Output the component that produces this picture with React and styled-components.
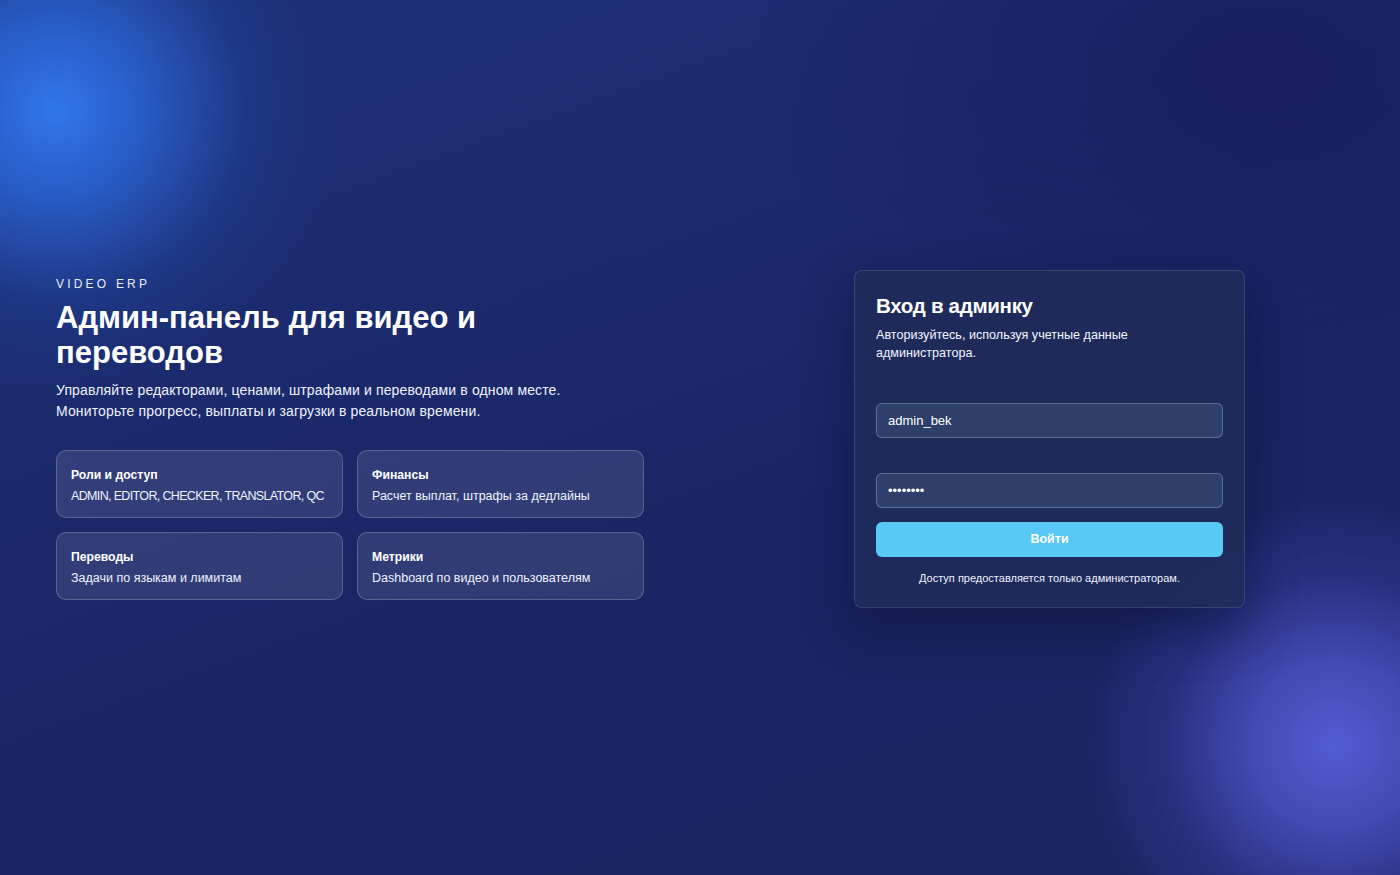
import React from "react";
import styled, { createGlobalStyle } from "styled-components";

const Global = createGlobalStyle`
  * { box-sizing: border-box; }
  html, body { margin: 0; padding: 0; }
  body {
    font-family: "Liberation Sans", Arial, sans-serif;
    color: #fff;
    background: #1b2766;
  }
`;

const Page = styled.div`
  position: relative;
  width: 100%;
  min-height: 100vh;
  height: 875px;
  overflow: hidden;
  display: flex;
  align-items: center;
  justify-content: space-between;
  padding: 2px 155px 0 56px;
  background:
    radial-gradient(circle at 55px 110px, rgba(48, 118, 236, 1) 0px, rgba(44, 106, 222, 0.75) 90px, rgba(36, 80, 180, 0.3) 190px, rgba(30, 60, 150, 0) 280px),
    radial-gradient(circle at 1335px 745px, rgba(82, 92, 210, 1) 0px, rgba(76, 86, 200, 0.8) 80px, rgba(60, 70, 180, 0.35) 170px, rgba(50, 60, 160, 0) 250px),
    linear-gradient(160deg, #1c2f75 0%, #1b2a6c 35%, #1a2464 60%, #1b2560 100%);
`;

const TopTint = styled.div`
  position: absolute;
  inset: 0;
  pointer-events: none;
  background: radial-gradient(ellipse at 1250px 60px, rgba(24, 22, 88, 0.55) 0px, rgba(24, 22, 88, 0) 500px);
`;

const Intro = styled.section`
  position: relative;
  width: 588px;
  display: flex;
  flex-direction: column;
`;

const Eyebrow = styled.div`
  font-size: 12px;
  letter-spacing: 3.2px;
  line-height: 14px;
  color: #e6ecff;
  margin-bottom: 9px;
`;

const Title = styled.h1`
  margin: 0;
  font-size: 31px;
  line-height: 35px;
  font-weight: 700;
  width: 480px;
`;

const Lead = styled.p`
  margin: 10px 0 0;
  font-size: 14px;
  letter-spacing: 0.13px;
  line-height: 21px;
  color: #eef2ff;
`;

const Features = styled.div`
  display: grid;
  grid-template-columns: 1fr 1fr;
  gap: 14px;
  margin-top: 28px;
`;

const Feature = styled.div`
  height: 68px;
  padding: 16px 14px 0;
  border-radius: 10px;
  background: rgba(255, 255, 255, 0.1);
  border: 1px solid rgba(255, 255, 255, 0.2);
  display: flex;
  flex-direction: column;
  gap: 5px;
`;

const FeatureTitle = styled.div`
  font-size: 12.2px;
  font-weight: 700;
  line-height: 16px;
`;

const FeatureText = styled.div`
  font-size: 12.5px;
  line-height: 16px;
  white-space: nowrap;
  letter-spacing: ${(p) => (p.$tight ? "-0.65px" : "0")};
  color: #f0f3ff;
`;

const Card = styled.form`
  position: relative;
  width: 391px;
  padding: 22px 21px 22px;
  border-radius: 8px;
  background: rgba(32, 44, 88, 0.85);
  border: 1px solid rgba(255, 255, 255, 0.12);
  box-shadow: 0 20px 50px rgba(8, 12, 40, 0.45);
  display: flex;
  flex-direction: column;
`;

const CardTitle = styled.h2`
  margin: 0;
  font-size: 20.5px;
  line-height: 26px;
  font-weight: 700;
  letter-spacing: -0.3px;
`;

const CardText = styled.p`
  margin: 7px 0 0;
  font-size: 12.6px;
  line-height: 18px;
  width: 280px;
  color: #f2f5ff;
`;

const Input = styled.input`
  display: block;
  width: 100%;
  height: 35px;
  margin-top: ${(p) => p.$mt}px;
  padding: 0 11px;
  border-radius: 6px;
  border: 1px solid rgba(148, 170, 210, 0.45);
  background: #2d3f6a;
  color: #fff;
  font-family: "Liberation Sans", Arial, sans-serif;
  font-size: 13px;
  outline: none;
`;

const Button = styled.button`
  height: 35px;
  margin-top: 14px;
  border: none;
  border-radius: 6px;
  background: #58c8f4;
  color: #fff;
  font-family: "Liberation Sans", Arial, sans-serif;
  font-size: 12.5px;
  font-weight: 700;
  cursor: pointer;
`;

const Note = styled.p`
  margin: 15px 0 0;
  font-size: 11px;
  line-height: 13px;
  text-align: center;
  color: #eef2ff;
`;

const features = [
  ["Роли и доступ", "ADMIN, EDITOR, CHECKER, TRANSLATOR, QC", true],
  ["Финансы", "Расчет выплат, штрафы за дедлайны"],
  ["Переводы", "Задачи по языкам и лимитам"],
  ["Метрики", "Dashboard по видео и пользователям"],
];

export default function App() {
  return (
    <>
      <Global />
      <Page>
        <TopTint />
        <Intro>
          <Eyebrow>VIDEO ERP</Eyebrow>
          <Title>Админ-панель для видео и переводов</Title>
          <Lead>
            Управляйте редакторами, ценами, штрафами и переводами в одном месте.
            <br />
            Мониторьте прогресс, выплаты и загрузки в реальном времени.
          </Lead>
          <Features>
            {features.map(([t, d, tight]) => (
              <Feature key={t}>
                <FeatureTitle>{t}</FeatureTitle>
                <FeatureText $tight={tight}>{d}</FeatureText>
              </Feature>
            ))}
          </Features>
        </Intro>
        <Card onSubmit={(e) => e.preventDefault()}>
          <CardTitle>Вход в админку</CardTitle>
          <CardText>Авторизуйтесь, используя учетные данные администратора.</CardText>
          <Input $mt={41} type="text" defaultValue="admin_bek" />
          <Input $mt={35} type="password" defaultValue="12345678" />
          <Button type="submit">Войти</Button>
          <Note>Доступ предоставляется только администраторам.</Note>
        </Card>
      </Page>
    </>
  );
}
